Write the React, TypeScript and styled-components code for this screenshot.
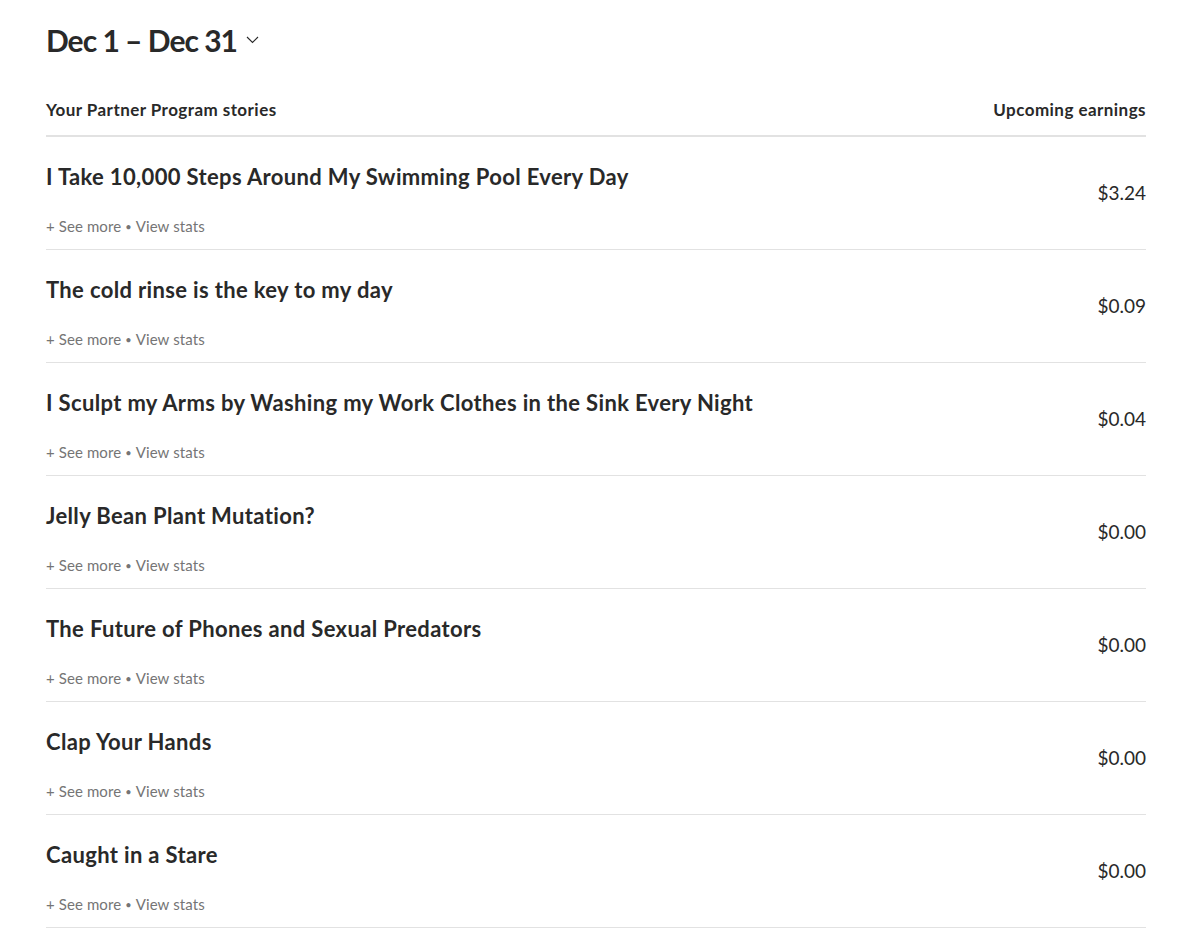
import styled, {createGlobalStyle} from "styled-components";

const GlobalStyle = createGlobalStyle`
  body {
    margin: 0;
    background: #ffffff;
    font-family: Lato, "Liberation Sans", sans-serif;
    color: #292929;
  }
`

const Page = styled.div`
  padding: 20px 57px 0 46px;
`
const RangeButton = styled.div`
  display: flex;
  align-items: center;
  gap: 9px;
  height: 40px;
`
const RangeTitle = styled.h1`
  margin: 0;
  font-size: 30px;
  font-weight: 700;
  line-height: 40px;
  letter-spacing: -1px;
  color: #292929;
`
const TableHead = styled.div`
  display: flex;
  justify-content: space-between;
  align-items: center;
  margin-top: 39px;
  padding-bottom: 14px;
  border-bottom: 2px solid #e2e2e2;
  font-size: 17px;
  font-weight: 700;
  line-height: 22px;
  letter-spacing: 0.45px;
`
const StoryRow = styled.div`
  display: flex;
  justify-content: space-between;
  align-items: center;
  padding: 26px 0 13px;
  border-bottom: 1px solid #e2e2e2;
`
const StoryInfo = styled.div`
  display: flex;
  flex-direction: column;
  gap: 25px;
`
const StoryTitle = styled.h2`
  margin: 0;
  font-size: 22px;
  font-weight: 700;
  line-height: 28px;
  letter-spacing: 0.35px;
  color: #292929;
`
const Meta = styled.div`
  font-size: 15px;
  line-height: 20px;
  letter-spacing: 0.1px;
  color: #757575;
`
const Dot = styled.span`
  font-size: 11px;
  line-height: 0;
  margin: 0 4px;
  vertical-align: 1px;
`
const Amount = styled.div`
  font-size: 19px;
  line-height: 24px;
  color: #292929;
  margin-bottom: 14px;
`

const stories = [
    {title: "I Take 10,000 Steps Around My Swimming Pool Every Day", amount: "$3.24"},
    {title: "The cold rinse is the key to my day", amount: "$0.09"},
    {title: "I Sculpt my Arms by Washing my Work Clothes in the Sink Every Night", amount: "$0.04"},
    {title: "Jelly Bean Plant Mutation?", amount: "$0.00"},
    {title: "The Future of Phones and Sexual Predators", amount: "$0.00"},
    {title: "Clap Your Hands", amount: "$0.00"},
    {title: "Caught in a Stare", amount: "$0.00"},
]

function Chevron() {
    return (
        <svg width="13" height="8" viewBox="0 0 13 8" fill="none">
            <path d="M1 1l5.5 5.5L12 1" stroke="#292929" strokeWidth="1.1"/>
        </svg>
    )
}

function App() {
    return (
        <Page>
            <GlobalStyle/>
            <RangeButton>
                <RangeTitle>Dec 1 – Dec 31</RangeTitle>
                <Chevron/>
            </RangeButton>
            <TableHead>
                <span>Your Partner Program stories</span>
                <span>Upcoming earnings</span>
            </TableHead>
            {stories.map(story =>
                <StoryRow key={story.title}>
                    <StoryInfo>
                        <StoryTitle>{story.title}</StoryTitle>
                        <Meta>+ See more<Dot>•</Dot>View stats</Meta>
                    </StoryInfo>
                    <Amount>{story.amount}</Amount>
                </StoryRow>
            )}
        </Page>
    )
}

export default App
